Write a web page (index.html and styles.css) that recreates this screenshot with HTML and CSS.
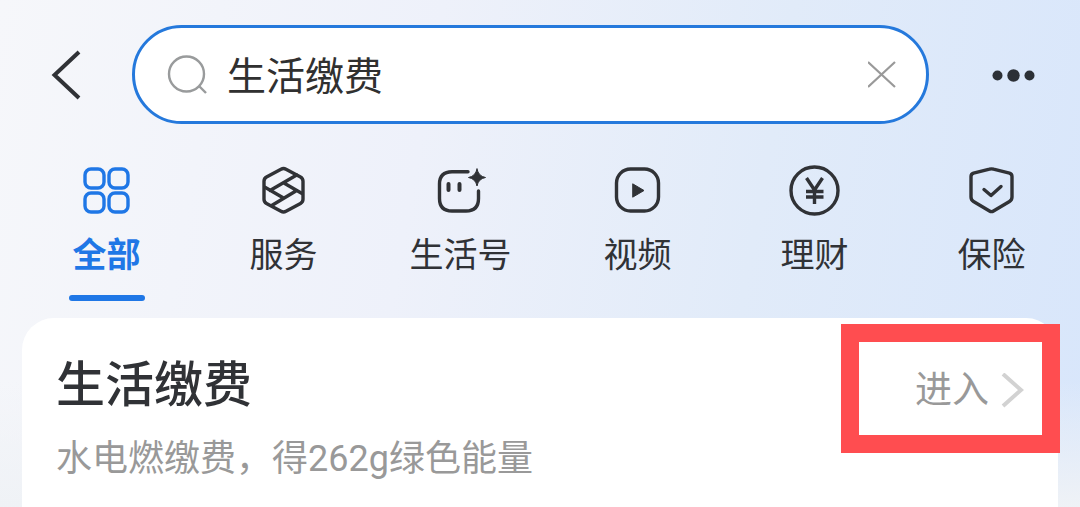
FILE: index.html
```html
<!DOCTYPE html>
<html lang="zh-CN">
<head>
<meta charset="utf-8">
<meta name="viewport" content="width=device-width, initial-scale=1">
<title>生活缴费</title>
<link rel="stylesheet" href="styles.css">
</head>
<body>
<header class="topbar">
  <button class="icon-button" type="button" aria-label="返回">
    <svg width="32" height="50" viewBox="0 0 32 50" fill="none" stroke="#303236" stroke-width="4"><path d="M29 2 4.500 25 29 48"/></svg>
  </button>
  <form class="search" role="search">
    <svg width="44" height="44" viewBox="0 0 44 44" fill="none" stroke="#999b9c" stroke-width="2.4"><circle cx="21.500" cy="21" r="17.5"/><path d="m34 33 7 7"/></svg>
    <input class="search-input" type="text" value="生活缴费" aria-label="搜索">
    <button class="icon-button" type="button" aria-label="清除">
      <svg width="28" height="28" viewBox="0 0 28 28" fill="none" stroke="#999" stroke-width="2.2"><path d="m0 1 27 25M27 1 0 26"/></svg>
    </button>
  </form>
  <button class="icon-button" type="button" aria-label="更多">
    <svg width="44" height="14" viewBox="0 0 44 14" fill="#2c3036"><circle cx="5.500" cy="7.500" r="5"/><circle cx="21.500" cy="7.500" r="6.2"/><circle cx="37.500" cy="7.500" r="5"/></svg>
  </button>
</header>

<nav class="tabs">
  <a class="tab tab-active" href="#all">
    <svg class="tab-icon" viewBox="0 0 52 52"><rect x="4" y="5" width="19" height="19" rx="6"/><rect x="28" y="5" width="19" height="19" rx="6"/><rect x="4" y="29" width="19" height="19" rx="6"/><rect x="28" y="29" width="19" height="19" rx="6"/></svg>
    <span>全部</span>
  </a>
  <a class="tab" href="#service">
    <svg class="tab-icon" viewBox="0 0 52 52"><path d="M23 5.200Q25.500 3.800 28 5.200L42.500 13Q45 14.400 45 17.200V35.300Q45 38.100 42.500 39.500L28 47.300Q25.500 48.700 23 47.300L8.500 39.500Q6 38.100 6 35.300V17.200Q6 14.400 8.500 13Z"/><path d="M38.700 11 12 26.500M7 23.300 25.500 34M38.700 26.500 13.700 41.500M25.500 18.700 44 29.500"/></svg>
    <span>服务</span>
  </a>
  <a class="tab" href="#life">
    <svg class="tab-icon" viewBox="0 0 52 52"><path d="M33 7.700H17Q4.500 7.700 4.500 20V34.500Q4.500 47 17 47H31Q43.500 47 43.500 34.500V27"/><path d="M13.500 20v6M24.500 20v6" stroke-width="4"/><path class="solid" d="M42 5q1.400 7.200 8.500 8.500-7.100 1.300-8.500 8.500-1.400-7.200-8.500-8.500 7.100-1.300 8.500-8.500Z"/></svg>
    <span>生活号</span>
  </a>
  <a class="tab" href="#video">
    <svg class="tab-icon" viewBox="0 0 52 52"><rect x="4.500" y="5" width="42" height="42" rx="14"/><path class="solid" d="m21 20 11 6.500-11 6.500Z"/></svg>
    <span>视频</span>
  </a>
  <a class="tab" href="#finance">
    <svg class="tab-icon" viewBox="0 0 52 52"><circle cx="25.500" cy="26.500" r="23.500"/><path d="m17.500 14 8 12 8-12M25.500 26v14M17 27.500h17.500M17 33h17.500" stroke-linecap="butt"/></svg>
    <span>理财</span>
  </a>
  <a class="tab" href="#insurance">
    <svg class="tab-icon" viewBox="0 0 52 52"><path d="M23.500 5.200Q25.500 4.500 27.500 5.200L43.500 9.200Q46 10 46 12.500V33Q46 36 43.500 37.500L27.500 47Q25.500 48.200 23.500 47L7.500 37.500Q5 36 5 33V12.500Q5 10 7.500 9.200Z"/><path d="m18 25.500 7 6 10-9"/></svg>
    <span>保险</span>
  </a>
</nav>

<main class="card">
  <div class="card-text">
    <h1 class="card-title">生活缴费</h1>
    <p class="card-note">水电燃缴费，得262g绿色能量</p>
  </div>
  <a class="enter" href="#enter">
    <span>进入</span>
    <svg width="24" height="36" viewBox="0 0 24 36" fill="none" stroke="#d2d2d2" stroke-width="4"><path d="m3 1 18 16L3 33"/></svg>
  </a>
  <div class="highlight"></div>
</main>
</body>
</html>
```

FILE: styles.css
```css
* {
  box-sizing: border-box;
}

body {
  margin: 0;
  min-height: 100vh;
  display: flex;
  flex-direction: column;
  overflow-x: hidden;
  color: #303236;
  font-family: Roboto, "Noto Sans CJK SC", sans-serif;
  background:
    linear-gradient(180deg, transparent 75%, #eff2f6 100%),
    linear-gradient(100deg, #f6f7fa 0%, #eef1fa 38%, #e1ebf9 68%, #d8e6fb 100%);
}

a {
  color: inherit;
  text-decoration: none;
}

.icon-button {
  display: flex;
  padding: 0;
  border: 0;
  background: none;
}

.topbar {
  display: flex;
  align-items: center;
  padding: 25px 44px 0 50px;
}

.search {
  flex: 1;
  display: flex;
  align-items: center;
  height: 99px;
  margin: 0 63px 0 50px;
  padding: 0 30px;
  border: 3px solid #2579dc;
  border-radius: 50px;
  background: #fff;
}

.search-input {
  flex: 1;
  min-width: 0;
  margin: 0 0 0 18px;
  padding: 0 0 4px;
  border: 0;
  outline: 0;
  background: none;
  color: #303030;
  font: inherit;
  font-size: 39px;
}

.tabs {
  display: grid;
  grid-template-columns: repeat(6, 1fr);
  padding: 40px 0 0 18px;
}

.tab {
  display: flex;
  flex-direction: column;
  align-items: center;
  font-size: 34px;
  line-height: 48px;
}

.tab span {
  padding: 15px 0 16px;
}

.tab-icon {
  width: 52px;
  height: 52px;
  fill: none;
  stroke: currentColor;
  stroke-width: 3.4;
  stroke-linecap: round;
  stroke-linejoin: round;
}

.tab-icon .solid {
  fill: currentColor;
  stroke-width: 1;
}

.tab-active {
  color: #1f77e6;
  font-weight: 700;
}

.tab-active::after {
  content: "";
  width: 76px;
  height: 6px;
  border-radius: 3px;
  background: currentColor;
}

.card {
  position: relative;
  flex: 1;
  display: flex;
  justify-content: space-between;
  align-items: flex-start;
  margin: 17px 22px 0;
  padding: 34px 34px 24px;
  border-radius: 32px 32px 0 0;
  background: #fff;
}

.card-title {
  margin: 0;
  font-size: 49px;
  font-weight: 500;
  line-height: 68px;
}

.card-note {
  margin: 0;
  padding-top: 14px;
  color: #999;
  font-size: 36px;
  line-height: 50px;
}

.enter {
  display: flex;
  align-items: center;
  gap: 11px;
  padding-top: 13px;
  color: #999;
  font-size: 37px;
  line-height: 52px;
}

.highlight {
  position: absolute;
  top: 6px;
  right: -2px;
  width: 219px;
  height: 129px;
  border: 18px solid #ff4d50;
  pointer-events: none;
}
```
